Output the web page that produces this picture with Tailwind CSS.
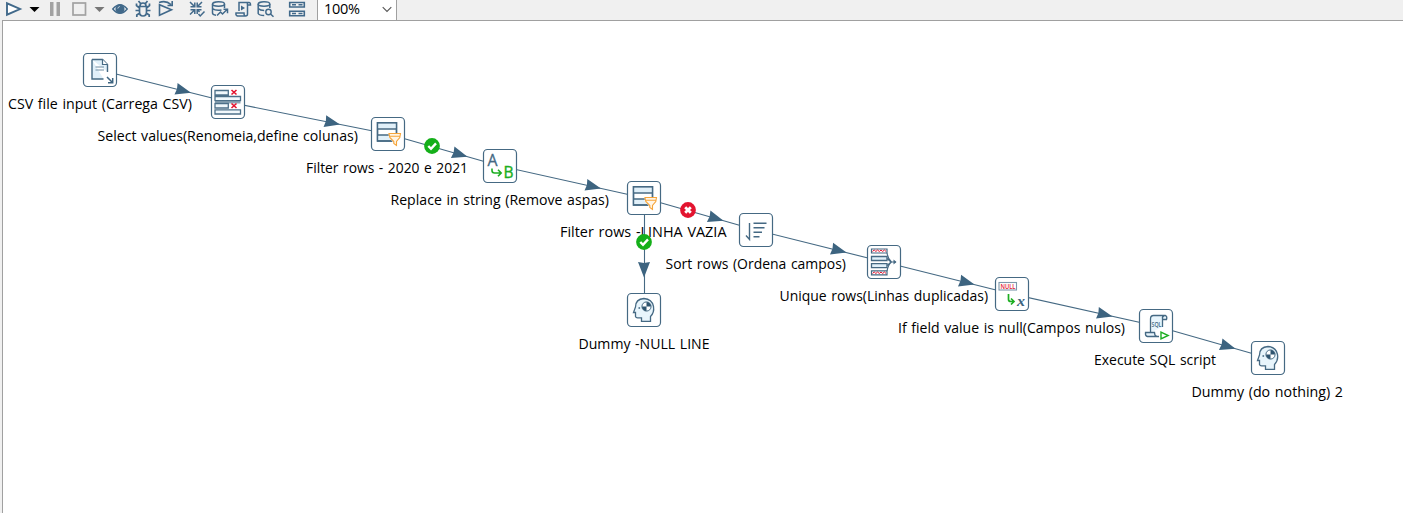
<!DOCTYPE html>
<html lang="pt">
<head>
<meta charset="utf-8">
<title>Transformation</title>
<script src="https://cdn.jsdelivr.net/npm/@tailwindcss/browser@4"></script>
</head>
<body class="flex h-[513px] w-[1403px] flex-col overflow-hidden bg-[#f0f0f0] font-['Open_Sans','Noto_Sans',sans-serif] text-black">
<header class="flex h-5 shrink-0 items-start text-[#41698a]">
  <svg class="h-5 w-[317px] shrink-0" viewBox="0 0 317 20" fill="none" stroke="currentColor" stroke-width="1.7">
    <!-- run -->
    <path d="M7 3.3V14.700L20 9z" fill="#fff" stroke-width="1.900"/>
    <path d="M29.500 7h10l-5 5z" fill="#000" stroke="none"/>
    <!-- pause, stop -->
    <path d="M50 2h3.500v14H50zM56.500 2H60v14h-3.500z" fill="#a2a2a2" stroke="none"/>
    <rect x="73" y="3" width="12.500" height="12" stroke="#a2a2a2"/>
    <path d="M94.500 7h10l-5 5z" fill="#777" stroke="none"/>
    <!-- preview -->
    <path d="M112.800 9Q120 0.500 127.200 9Q120 17.500 112.800 9z" fill="#fff" stroke-width="1.500"/>
    <circle cx="120" cy="9" r="4.600" fill="currentColor" stroke="none"/>
    <path d="M117.800 8.500q.3-1.700 2-2" stroke="#dfe8ee" stroke-width=".8"/>
    <!-- debug -->
    <path d="M139.500 6.500h7v5.500q0 4-3.500 4t-3.500-4zM140 6q0-3 3-3t3 3M140.500 3.500 138.500 1M145.500 3.500 147.500 1M139.500 8 136.500 5.500V3.500M146.500 8l3-2.500V3.500M139.500 10.500H135.500M146.500 10.500h4M139.800 13l-3 2v2M146.200 13l3 2v2"/>
    <!-- replay -->
    <path d="M159.500 15.300V4.800L171.500 9.800zM159 2.500Q166 0 171 4.500M172.200 1V5.500H167.500" stroke-width="1.600"/>
    <!-- verify -->
    <path d="M190 2l4.500 4.500M194.800 2.500v4.300H190.500M202 2l-4.500 4.500M197.200 2.500v4.300h4.300M190 14.500l4.500-4.500M194.800 14V9.700H190.500M197.200 14V9.700h4.300M197.500 10l2 2M198.500 14l1.700 2 4.300-4.500" stroke-width="1.500"/>
    <!-- impact -->
    <ellipse cx="218.500" cy="4" rx="6" ry="2.200" stroke-width="1.500"/>
    <path d="M212.500 4v9q0 1.800 3.500 2.200M224.500 4v4M212.500 8.500q3 2.500 9 1.500M217 15.500l3.500-3.500 2 2 4.500-4.500M223.500 9.200h4v4" stroke-width="1.500"/>
    <!-- sql script -->
    <path d="M239 11V2.500h9.500q2-.5 2 2.500h-3V14q0 2-2 2h-8q-2-.5-1.500-3h8q0 3 1.500 3M247.500 5q-.5-2.500 1-2.500" stroke-width="1.500"/>
    <path d="M241 5.500v5l4-2.500z" fill="currentColor" stroke="none"/>
    <!-- explore database -->
    <ellipse cx="264" cy="4" rx="5.800" ry="2.200" stroke-width="1.500"/>
    <path d="M258.200 4v9.500q1 2 6 2M269.800 4v4M258.200 8.500q2 2 6 2" stroke-width="1.500"/>
    <circle cx="268.500" cy="12" r="2.700" stroke-width="1.400"/><path d="M270.500 14l3 2.800" stroke-width="1.500"/>
    <!-- results -->
    <path d="M289.700 2.500h14.600v4.500H289.700zM289.700 11.300h14.600v4.500H289.700zM292 4.700h4M298.500 4.700h4M292 13.500h4M298.500 13.500h4" stroke-width="1.600"/>
  </svg>
  <div class="flex h-5 w-20 items-start justify-between border-x border-[#a0a0a0] bg-white pr-1 pl-1.5 text-black">
    <span class="text-[14.500px] leading-[18px] tracking-[-0.300px]">100%</span>
    <svg class="h-[18px] w-2.5" viewBox="0 0 10 18" fill="none" stroke="#555" stroke-width="1.100"><path d="M.7 7.200l4.300 4.200L9.300 7.200"/></svg>
  </div>
</header>
<main class="ml-0.5 flex-1 border-t border-l border-[#a0a0a0] bg-white">
  <svg class="block h-[492px] w-[1400px]" viewBox="3 21 1400 492" fill="none">
    <defs>
      <rect id="box" x="-16.500" y="-16.500" width="33" height="33" rx="4" fill="#fff" stroke="#456983" stroke-width="1.200"/>
      <path id="head" d="M0 0L-15.500 -6L-14.500 0L-15.500 6z" fill="#3d6480"/>
      <g id="filter" stroke="#456983" stroke-width="1.400">
        <path d="M-10.500 -11.200H8.500V7H-10.500z" fill="#fff"/><path d="M-10 -10.500H8v5H-10zM-10 1H8v5H-10z" fill="#e1f0f9" stroke="none"/>
        <path d="M-10.500 -11.200H8.500V7H-10.500zM-10.500 -5H8.500M-10.500 1H8.500"/>
        <path d="M2 .5H12.500V2.500L8.800 7.500V11.500L6 9.500V7.500L2 2.500z" fill="#fff" stroke="#fff" stroke-width="2.500"/>
        <path d="M1 -.500H12.500L11.800 3.500L8.500 7.500V11.500L5.800 9.500V7.500L1.800 3.500zM1.800 2.300H12" fill="#fff5e6" stroke="#f6a53b" stroke-width="1.100"/>
      </g>
      <g id="dummy" stroke="#456983" stroke-width="1.300">
        <path d="M-6 11.500H6.500V6.500Q10.500 2.500 9.500 -3.500Q8 -11 0 -11.500Q-8.500 -11 -8.500 -3L-10.500 2.500H-8.500V6.500Q-8 8 -6 7.800H-2V11.500" fill="#e8f5fc" stroke="none"/>
        <path d="M6.500 12V6.500Q10.500 2.500 9.500 -3.500Q8 -11 0 -11.500Q-8.500 -11 -8.500 -3L-10.500 2.500H-8.500V6.500Q-8 8 -6 7.800H-2.500V11.400H6.500"/>
        <circle cx="2.500" cy="-3.500" r="4.600" fill="#fff" stroke-width="1"/>
        <path d="M2.500 -3.500V-8A4.500 4.500 0 0 1 7 -3.500zM2.500 -3.500V1A4.500 4.500 0 0 1 -2 -3.500z" fill="#2f5570" stroke="none"/>
        <path d="M-5.500 -2h1.600" stroke-width="1.600"/>
      </g>
      <g id="ok"><circle r="7.900" fill="#14af19"/><path d="M-3.700 0L-1 2.800L4 -2.600" stroke="#fff" stroke-width="2.400"/></g>
      <g id="fail"><circle r="7.900" fill="#e3142f"/><path d="M-2.800 -2.800L2.800 2.800M2.800 -2.800L-2.800 2.800" stroke="#fff" stroke-width="2.800"/></g>
    </defs>

    <!-- hops -->
    <path d="M100 70L228 102L388 134L500 166L644 198L756 230L884 262L1012 294L1156 326L1268 358M644.500 198V310" stroke="#456983" stroke-width="1.100"/>
    <use href="#head" transform="translate(191 92.700) rotate(15)"/>
    <use href="#head" transform="translate(340 124.400) rotate(12.500)"/>
    <use href="#head" transform="translate(467.500 156.700) rotate(17)"/>
    <use href="#head" transform="translate(601 188.400) rotate(13.500)"/>
    <use href="#head" transform="translate(723.500 220.700) rotate(17)"/>
    <use href="#head" transform="translate(846.500 252.600) rotate(15)"/>
    <use href="#head" transform="translate(974.500 284.600) rotate(15)"/>
    <use href="#head" transform="translate(1112.500 316.400) rotate(13.500)"/>
    <use href="#head" transform="translate(1235.500 348.700) rotate(17)"/>
    <use href="#head" transform="translate(644 277.500) rotate(90)"/>

    <!-- steps -->
    <g transform="translate(100 70)"><use href="#box"/>
      <path d="M-8 -10.500H2.500L7.500 -5.500V2M3.500 9H-8V-10.500" fill="#e1f0f9" stroke="#456983" stroke-width="1.400"/>
      <path d="M2.500 -10.500V-5.500H7.500" fill="#fff" stroke="#456983" stroke-width="1.200"/>
      <path d="M-4.500 -3H4M-4.500 0H4" stroke="#708da2"/>
      <path d="M7 7L12.500 12.500M12.700 8V12.700H8" stroke="#3d6480" stroke-width="1.500"/>
    </g>
    <g transform="translate(228 102)"><use href="#box"/>
      <path d="M-13 -1.500H12.500V1.500H-13z" fill="#8ea6b6"/>
      <path d="M-13 -11.500H.3V-7H-13zM-13 -5.500H12.500V-1.300H-13zM-13 1.500H.3V6H-13zM-13 7.800H12.500V12H-13z" fill="#f1f8fc" stroke="#4d7089" stroke-width="1.300"/>
      <path d="M3.500 -12L8.500 -7.500M8.500 -12L3.500 -7.500M3.500 1.500L8.500 6M8.500 1.500L3.500 6" stroke="#e3142f" stroke-width="1.600"/>
    </g>
    <g transform="translate(388 134)"><use href="#box"/><use href="#filter"/></g>
    <g transform="translate(500 166)"><use href="#box"/>
      <text x="-12.500" y="0" font-size="16" textLength="10" lengthAdjust="spacingAndGlyphs" fill="#456983" stroke="#456983" stroke-width=".3">A</text>
      <path d="M-8 2.500V4.500Q-8 7 -5.500 7H.5M-2 3.700L1.200 7L-2 10.200" stroke="#1dae22" stroke-width="1.600"/>
      <text x="3.500" y="11.500" font-size="16" textLength="10" lengthAdjust="spacingAndGlyphs" fill="#1dae22" stroke="#1dae22" stroke-width=".4">B</text>
    </g>
    <g transform="translate(644 198)"><use href="#box"/><use href="#filter"/></g>
    <g transform="translate(756 230)"><use href="#box"/>
      <path d="M-6.500 -7V9M-10 5.500L-6.500 9.500V5.500" stroke="#456983" stroke-width="1.400"/>
      <path d="M-2.500 -6.700H10.500M-2.500 -2.200H8.500M-2.500 2.300H6M-2.500 6.700H3.500" stroke="#456983" stroke-width="1.500"/>
    </g>
    <g transform="translate(884 262)"><use href="#box"/>
      <path d="M-12.500 -13H3V-9H-12.500zM-12.500 8.800H3V12.800H-12.500z" fill="#fff" stroke="#456983" stroke-width="1.200"/>
      <path d="M-11.500 -10.500l1.700-1.500 1.700 1.500 1.700-1.500 1.700 1.500 1.700-1.500 1.700 1.500 1.700-1.500 1.700 1.500M-11.500 11.500l1.700-1.500 1.700 1.500 1.700-1.500 1.700 1.500 1.700-1.500 1.700 1.500 1.700-1.500 1.700 1.500" stroke="#e3142f"/>
      <path d="M-12.500 -5.500H3V-1.500H-12.500zM-12.500 1.700H3V5.700H-12.500z" fill="#e1f0f9" stroke="#456983" stroke-width="1.300"/>
      <path d="M3 -9Q4 -3 7.500 0Q4 3 3 9M3 -3.500L7 0L3 3.700M6.500 0H12" stroke="#456983" stroke-width="1.100"/>
      <path d="M9.500 -2.500L12.500 0L9.500 2.500z" fill="#456983"/>
    </g>
    <g transform="translate(1012 294)"><use href="#box"/>
      <rect x="-13" y="-11.500" width="17.500" height="7.500" fill="#fff" stroke="#7d98ab" stroke-width="1.100"/>
      <text x="-11.500" y="-5" font-size="7.500" font-weight="600" textLength="15" lengthAdjust="spacingAndGlyphs" fill="#e3142f">NULL</text>
      <path d="M-3.500 0V5.500Q-3.500 7.500 -1 7.500H1.500M-1 4.500L2 7.500L-1 10.500" stroke="#1dae22" stroke-width="1.700"/>
      <text x="5" y="12" font-size="14" font-weight="700" font-style="italic" font-family="'Liberation Serif',serif" fill="#3d6480" textLength="8" lengthAdjust="spacingAndGlyphs">x</text>
    </g>
    <g transform="translate(1156 326)"><use href="#box"/>
      <path d="M-5.500 6.500V-7Q-5.500 -10.500 -2.500 -10.500H9.500Q11.500 -9.500 10.500 -6.500H6.500V1M6.500 -7Q6 -10 8.500 -10.500M3 10.500H-8.500Q-11 10 -10.500 6.500H-1.500Q-1.500 10 1 10.500" fill="#e8f5fc" stroke="#456983" stroke-width="1.300"/>
      <text x="-4.500" y="1.200" font-size="6.500" font-weight="600" textLength="10" lengthAdjust="spacingAndGlyphs" fill="#456983">SQL</text>
      <path d="M5 6V13L12.200 9.500z" fill="#fff" stroke="#1dae22" stroke-width="1.400"/>
    </g>
    <g transform="translate(1268 358)"><use href="#box"/><use href="#dummy"/></g>
    <g transform="translate(644 310)"><use href="#box"/><use href="#dummy"/></g>

    <!-- step names -->
    <g class="[word-spacing:1px]" fill="#000" font-size="14.600">
      <text x="8" y="109" textLength="184" lengthAdjust="spacingAndGlyphs">CSV file input (Carrega CSV)</text>
      <text x="97.500" y="141" textLength="260.500" lengthAdjust="spacingAndGlyphs">Select values(Renomeia,define colunas)</text>
      <text x="306" y="173" textLength="162" lengthAdjust="spacingAndGlyphs">Filter rows - 2020 e 2021</text>
      <text x="390.500" y="205" textLength="218.500" lengthAdjust="spacingAndGlyphs">Replace in string (Remove aspas)</text>
      <text x="560" y="237" textLength="166.500" lengthAdjust="spacingAndGlyphs">Filter rows -LINHA VAZIA</text>
      <text x="665.500" y="269" textLength="180.500" lengthAdjust="spacingAndGlyphs">Sort rows (Ordena campos)</text>
      <text x="779.500" y="301" textLength="208.500" lengthAdjust="spacingAndGlyphs">Unique rows(Linhas duplicadas)</text>
      <text x="898" y="333" textLength="227" lengthAdjust="spacingAndGlyphs">If field value is null(Campos nulos)</text>
      <text x="1094" y="365" textLength="122" lengthAdjust="spacingAndGlyphs">Execute SQL script</text>
      <text x="1191.500" y="397" textLength="151.500" lengthAdjust="spacingAndGlyphs">Dummy (do nothing) 2</text>
      <text x="578.500" y="349" textLength="131" lengthAdjust="spacingAndGlyphs">Dummy -NULL LINE</text>
    </g>

    <!-- hop conditions -->
    <use href="#ok" x="432" y="146"/>
    <use href="#fail" x="688" y="210"/>
    <use href="#ok" x="644" y="242"/>
  </svg>
</main>
</body>
</html>
